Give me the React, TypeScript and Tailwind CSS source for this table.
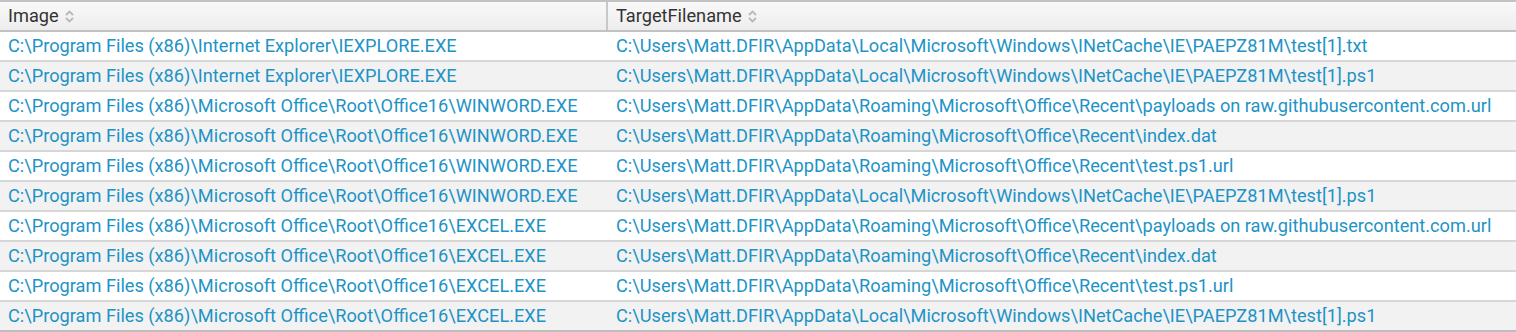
import React from "react"

const rows: [string, string][] = [
  ["C:\\Program Files (x86)\\Internet Explorer\\IEXPLORE.EXE", "C:\\Users\\Matt.DFIR\\AppData\\Local\\Microsoft\\Windows\\INetCache\\IE\\PAEPZ81M\\test[1].txt"],
  ["C:\\Program Files (x86)\\Internet Explorer\\IEXPLORE.EXE", "C:\\Users\\Matt.DFIR\\AppData\\Local\\Microsoft\\Windows\\INetCache\\IE\\PAEPZ81M\\test[1].ps1"],
  ["C:\\Program Files (x86)\\Microsoft Office\\Root\\Office16\\WINWORD.EXE", "C:\\Users\\Matt.DFIR\\AppData\\Roaming\\Microsoft\\Office\\Recent\\payloads on raw.githubusercontent.com.url"],
  ["C:\\Program Files (x86)\\Microsoft Office\\Root\\Office16\\WINWORD.EXE", "C:\\Users\\Matt.DFIR\\AppData\\Roaming\\Microsoft\\Office\\Recent\\index.dat"],
  ["C:\\Program Files (x86)\\Microsoft Office\\Root\\Office16\\WINWORD.EXE", "C:\\Users\\Matt.DFIR\\AppData\\Roaming\\Microsoft\\Office\\Recent\\test.ps1.url"],
  ["C:\\Program Files (x86)\\Microsoft Office\\Root\\Office16\\WINWORD.EXE", "C:\\Users\\Matt.DFIR\\AppData\\Local\\Microsoft\\Windows\\INetCache\\IE\\PAEPZ81M\\test[1].ps1"],
  ["C:\\Program Files (x86)\\Microsoft Office\\Root\\Office16\\EXCEL.EXE", "C:\\Users\\Matt.DFIR\\AppData\\Roaming\\Microsoft\\Office\\Recent\\payloads on raw.githubusercontent.com.url"],
  ["C:\\Program Files (x86)\\Microsoft Office\\Root\\Office16\\EXCEL.EXE", "C:\\Users\\Matt.DFIR\\AppData\\Roaming\\Microsoft\\Office\\Recent\\index.dat"],
  ["C:\\Program Files (x86)\\Microsoft Office\\Root\\Office16\\EXCEL.EXE", "C:\\Users\\Matt.DFIR\\AppData\\Roaming\\Microsoft\\Office\\Recent\\test.ps1.url"],
  ["C:\\Program Files (x86)\\Microsoft Office\\Root\\Office16\\EXCEL.EXE", "C:\\Users\\Matt.DFIR\\AppData\\Local\\Microsoft\\Windows\\INetCache\\IE\\PAEPZ81M\\test[1].ps1"],
]

function SortIcon() {
  return (
    <svg width="9" height="13" viewBox="0 0 9 13" className="ml-[6px]" fill="none" stroke="#b8b8b8" strokeWidth="1.8">
      <path d="M1 5 L4.5 1.5 L8 5" />
      <path d="M1 8 L4.5 11.5 L8 8" />
    </svg>
  )
}

export default function App() {
  return (
    <div className="w-[1516px] h-[332px] bg-white text-[18.2px] leading-none" style={{ fontFamily: "Roboto, 'Liberation Sans', sans-serif" }}>
      <div className="grid grid-cols-[608px_1fr] h-[32px] border-t-2 border-b-2 border-[#c2c2c2] bg-gradient-to-b from-[#f9f9f9] to-[#ededed] text-[#333]">
        <div className="flex items-center pl-[8px] border-r-2 border-[#c8c8c8]">
          Image
          <SortIcon />
        </div>
        <div className="flex items-center pl-[8px]">
          TargetFilename
          <SortIcon />
        </div>
      </div>
      {rows.map(([img, target], i) => (
        <div
          key={i}
          className={`grid grid-cols-[608px_1fr] h-[30px] border-b-2 text-[#1e93c6] ${i % 2 === 0 ? "bg-white" : "bg-[#f2f2f2]"} ${i === rows.length - 1 ? "border-[#bdbdbd]" : "border-[#d6d6d6]"}`}
        >
          <div className="flex items-center pl-[8px] whitespace-nowrap">{img}</div>
          <div className="flex items-center pl-[8px] whitespace-nowrap">{target}</div>
        </div>
      ))}
    </div>
  )
}
